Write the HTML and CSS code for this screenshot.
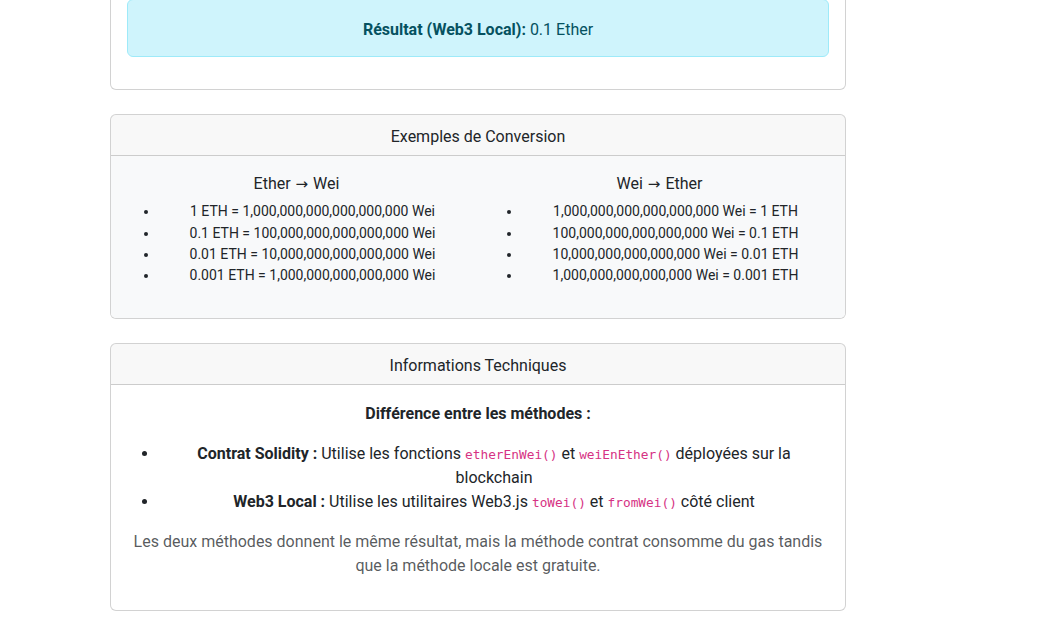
FILE: index.html
```html
<!DOCTYPE html>
<html lang="fr">
<head>
<meta charset="utf-8">
<title>Conversion</title>
<link rel="stylesheet" href="styles.css">
</head>
<body>
<main class="page">
  <section class="card card-first">
    <div class="card-body">
      <div class="alert">
        <strong>Résultat (Web3 Local):</strong> 0.1 Ether
      </div>
    </div>
  </section>

  <section class="card">
    <div class="card-header">Exemples de Conversion</div>
    <div class="card-body bg-light examples">
      <div class="row">
        <div class="col">
          <h6 class="col-title">Ether <span class="arrow">→</span> Wei</h6>
          <ul class="small-list">
            <li>1 ETH = 1,000,000,000,000,000,000 Wei</li>
            <li>0.1 ETH = 100,000,000,000,000,000 Wei</li>
            <li>0.01 ETH = 10,000,000,000,000,000 Wei</li>
            <li>0.001 ETH = 1,000,000,000,000,000 Wei</li>
          </ul>
        </div>
        <div class="col">
          <h6 class="col-title">Wei <span class="arrow">→</span> Ether</h6>
          <ul class="small-list">
            <li>1,000,000,000,000,000,000 Wei = 1 ETH</li>
            <li>100,000,000,000,000,000 Wei = 0.1 ETH</li>
            <li>10,000,000,000,000,000 Wei = 0.01 ETH</li>
            <li>1,000,000,000,000,000 Wei = 0.001 ETH</li>
          </ul>
        </div>
      </div>
    </div>
  </section>

  <section class="card">
    <div class="card-header">Informations Techniques</div>
    <div class="card-body center info">
      <p><strong>Différence entre les méthodes :</strong></p>
      <ul class="info-list">
        <li><strong>Contrat Solidity :</strong> Utilise les fonctions <code>etherEnWei()</code> et <code>weiEnEther()</code> déployées sur la blockchain</li>
        <li><strong>Web3 Local :</strong> Utilise les utilitaires Web3.js <code>toWei()</code> et <code>fromWei()</code> côté client</li>
      </ul>
      <p class="muted">Les deux méthodes donnent le même résultat, mais la méthode contrat consomme du gas tandis que la méthode locale est gratuite.</p>
    </div>
  </section>
</main>
</body>
</html>
```

FILE: styles.css
```css
* { box-sizing: border-box; }

html, body {
  margin: 0;
  padding: 0;
  background: #fff;
}

body {
  font-family: Roboto, "Liberation Sans", Arial, sans-serif;
  font-size: 16px;
  line-height: 1.5;
  color: #212529;
}

.page {
  width: 736px;
  margin-left: 110px;
  margin-top: -18px;
}

.card {
  border: 1px solid rgba(0, 0, 0, 0.175);
  border-radius: 6px;
  background: #fff;
  margin-bottom: 24px;
  overflow: hidden;
}

.card-header {
  padding: 10px 16px 6px;
  text-align: center;
  background: rgba(33, 37, 41, 0.03);
  border-bottom: 1px solid rgba(0, 0, 0, 0.175);
}

.card-body {
  padding: 16px;
}

.bg-light {
  background: #f8f9fa;
}

.examples {
  padding: 18px 16px 15px;
}

.info {
  padding: 17px 16px 16px;
}

.alert {
  padding: 18px 16px 14px;
  margin-bottom: 16px;
  border: 1px solid #9eeaf9;
  border-radius: 6px;
  background: #cff4fc;
  color: #055160;
  text-align: center;
}

.alert strong { font-weight: 700; }

.row {
  display: flex;
  margin: 0 -12px;
}

.col {
  flex: 1 1 0;
  padding: 0 12px;
  text-align: center;
}

.col-title {
  margin: 0 0 8px;
  font-size: 16px;
  font-weight: 400;
  line-height: 1.2;
}

.arrow {
  font-family: "DejaVu Sans", sans-serif;
  font-size: 15px;
  padding: 0 1px;
}

.small-list {
  margin: 0 0 16px;
  padding-left: 32px;
  font-size: 14px;
  line-height: 21.33px;
}

.center { text-align: center; }

p { margin: 0 0 16px; }

.info-list {
  margin: 0 0 16px;
  padding-left: 32px;
}

strong { font-weight: 700; }

code {
  font-family: "DejaVu Sans Mono", "Liberation Mono", monospace;
  font-size: 12.8px;
  line-height: 1;
  color: #d63384;
}

.muted {
  color: rgba(33, 37, 41, 0.75);
}
```
